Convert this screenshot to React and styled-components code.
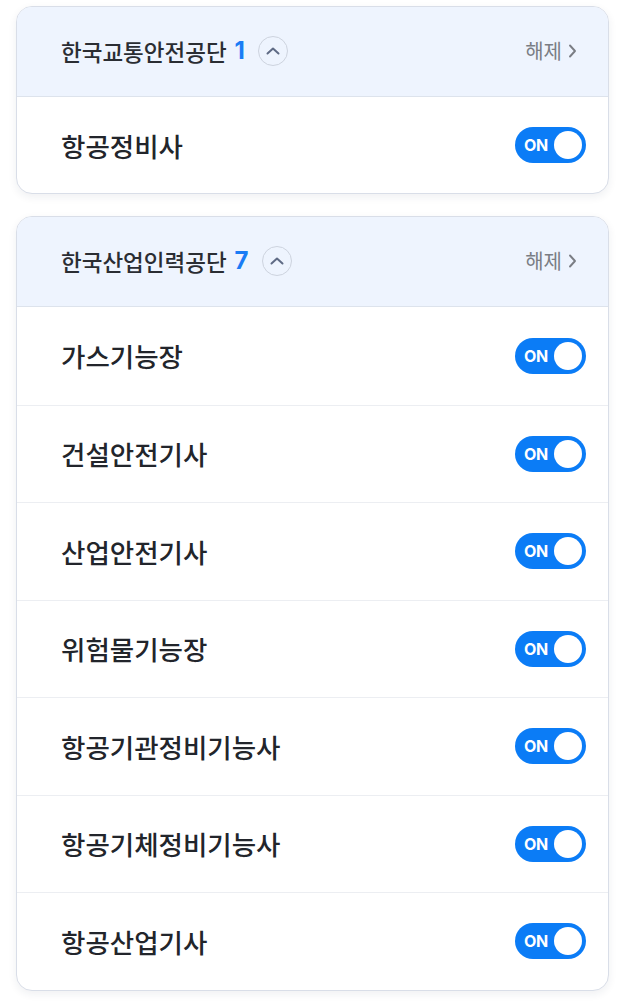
import React from "react";
import styled, { createGlobalStyle } from "styled-components";

const GlobalStyle = createGlobalStyle`
  body {
    margin: 0;
    background: #ffffff;
    font-family: "Noto Sans CJK KR", "Noto Sans", sans-serif;
  }
`;

const Page = styled.div`
  display: flex;
  flex-direction: column;
  gap: 22px;
  padding: 6px 12px 14px 16px;
`;

const Card = styled.div`
  border: 1px solid #d9dee8;
  border-radius: 16px;
  overflow: hidden;
  background: #ffffff;
  box-shadow: 0 3px 9px rgba(30, 40, 70, 0.07);
`;

const Header = styled.div`
  display: flex;
  align-items: center;
  box-sizing: border-box;
  height: 90px;
  padding: 0 31px 2px 44px;
  background: #eef4fe;
  border-bottom: 1px solid #dde3ec;
`;

const Org = styled.span`
  font-size: 22.5px;
  font-weight: 500;
  color: #2a2d33;
`;

const Count = styled.span`
  margin-left: 8px;
  font-family: "Inter", "Noto Sans", sans-serif;
  font-size: 24px;
  font-weight: 700;
  color: #1a7cf5;
`;

const Collapse = styled.button`
  display: flex;
  align-items: center;
  justify-content: center;
  width: 30px;
  height: 30px;
  margin-left: 13px;
  padding: 0;
  border: 1.5px solid #cdd3de;
  border-radius: 50%;
  background: transparent;
  color: #5f6b85;
`;

const Release = styled.div`
  display: flex;
  align-items: center;
  gap: 6px;
  margin-left: auto;
  font-size: 20px;
  color: #7a7d84;
`;

const Row = styled.div`
  display: flex;
  align-items: center;
  justify-content: space-between;
  box-sizing: border-box;
  height: ${(p) => p.h}px;
  padding: 0 22px 0 44px;
  border-top: ${(p) => (p.first ? "none" : "1px solid #eceef2")};
`;

const Name = styled.span`
  font-size: 26.5px;
  font-weight: 500;
  color: #22252b;
`;

const Toggle = styled.div`
  display: flex;
  align-items: center;
  justify-content: space-between;
  width: 71px;
  height: 36px;
  box-sizing: border-box;
  padding: 0 4px 0 9px;
  border-radius: 18px;
  background: #0b7cf6;
`;

const ToggleLabel = styled.span`
  font-family: "Inter", "Noto Sans", sans-serif;
  font-size: 16px;
  font-weight: 700;
  color: #ffffff;
  letter-spacing: -0.4px;
`;

const Knob = styled.span`
  width: 28px;
  height: 28px;
  border-radius: 50%;
  background: #ffffff;
`;

const groups = [
  { org: "한국교통안전공단", items: ["항공정비사"] },
  {
    org: "한국산업인력공단",
    items: [
      "가스기능장",
      "건설안전기사",
      "산업안전기사",
      "위험물기능장",
      "항공기관정비기능사",
      "항공기체정비기능사",
      "항공산업기사",
    ],
  },
];

const ChevronUp = () => (
  <svg width="16" height="16" viewBox="0 0 16 16" fill="none">
    <path d="M2.5 10.5 L8 5.5 L13.5 10.5" stroke="currentColor" strokeWidth="2" strokeLinecap="round" strokeLinejoin="round" />
  </svg>
);

const ChevronRight = () => (
  <svg width="9" height="16" viewBox="0 0 9 16" fill="none">
    <path d="M2 2.5 L7 8 L2 13.5" stroke="currentColor" strokeWidth="1.9" strokeLinecap="round" strokeLinejoin="round" />
  </svg>
);

const App = () => (
  <>
    <GlobalStyle />
    <Page>
      {groups.map((g, gi) => (
        <Card key={g.org}>
          <Header>
            <Org>{g.org}</Org>
            <Count>{g.items.length}</Count>
            <Collapse>
              <ChevronUp />
            </Collapse>
            <Release>
              해제
              <ChevronRight />
            </Release>
          </Header>
          {g.items.map((item, i) => (
            <Row key={item} first={i === 0} h={gi === 0 ? 96 : 97.5}>
              <Name>{item}</Name>
              <Toggle>
                <ToggleLabel>ON</ToggleLabel>
                <Knob />
              </Toggle>
            </Row>
          ))}
        </Card>
      ))}
    </Page>
  </>
);

export default App;
